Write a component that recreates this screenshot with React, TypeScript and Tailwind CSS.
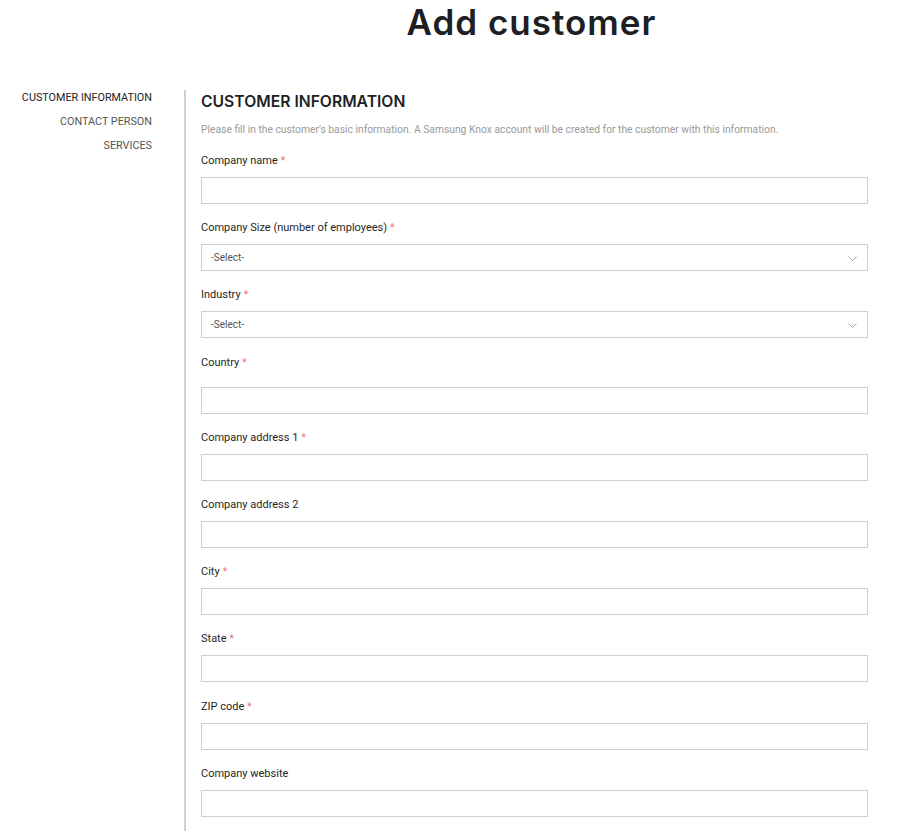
import React from "react";

const body = { fontFamily: "Roboto, 'Liberation Sans', sans-serif" };
const display = { fontFamily: "Inter, 'Liberation Sans', sans-serif" };

function Label({ text, req }: { text: string; req?: boolean }) {
  return (
    <div className="h-[15px] pt-[1px] text-[11px] leading-[14px] text-[#1f1f1f]">
      {text}
      {req && <span className="ml-[3px] text-[10px] text-[#ef6b70]">*</span>}
    </div>
  );
}

function Input() {
  return <div className="h-[27px] w-full border border-[#cfcfcf] bg-white" />;
}

function Select() {
  return (
    <div className="flex h-[27px] w-full items-center justify-between border border-[#cfcfcf] bg-white pl-[9px] pr-[9px]">
      <span className="text-[10px] text-[#555]">-Select-</span>
      <svg width="9" height="5" viewBox="0 0 9 5" className="mr-[1px] mt-[1px]">
        <polyline points="0.5,0.5 4.5,4.5 8.5,0.5" fill="none" stroke="#a8a8a8" strokeWidth="1" />
      </svg>
    </div>
  );
}

function Field({ label, req, kind = "input", extra = 0, after = 16 }: { label: string; req?: boolean; kind?: "input" | "select"; extra?: number; after?: number }) {
  return (
    <div style={{ marginBottom: after }}>
      <Label text={label} req={req} />
      <div style={{ height: 9 + extra }} />
      {kind === "select" ? <Select /> : <Input />}
    </div>
  );
}

export default function App() {
  return (
    <div className="min-h-[832px] w-[912px] bg-white" style={body}>
      <div className="ml-[185px] w-[693px] pt-[1px] text-center">
        <h1 className="text-[35px] font-semibold leading-[42px] tracking-[1px] text-[#1e1f24]" style={display}>
          Add customer
        </h1>
      </div>
      <div className="mt-[47px] flex">
        <nav className="flex w-[152px] flex-col items-end pt-[1px] text-[10.8px] uppercase leading-[14px]">
          <div className="text-[#222]">Customer Information</div>
          <div className="mt-[10px] text-[#555]">Contact Person</div>
          <div className="mt-[10px] text-[#555]">Services</div>
        </nav>
        <div className="ml-[32px] w-[2px] self-stretch bg-[#cfcfcf]" />
        <div className="ml-[15px] w-[667px] pb-[14px]">
          <h2 className="h-[22px] pt-[2px] text-[15.7px] font-semibold leading-[20px] text-[#1e1f24]" style={display}>
            CUSTOMER INFORMATION
          </h2>
          <p className="mt-[12px] text-[10.3px] leading-[12px] text-[#9a9a9a]">
            Please fill in the customer's basic information. A Samsung Knox account will be created for the customer with this information.
          </p>
          <div className="mt-[17px]">
            <Field label="Company name" req />
            <Field label="Company Size (number of employees)" req kind="select" />
            <Field label="Industry" req kind="select" after={17} />
            <Field label="Country" req extra={8} />
            <Field label="Company address 1" req />
            <Field label="Company address 2" />
            <Field label="City" req />
            <Field label="State" req after={17} />
            <Field label="ZIP code" req />
            <Field label="Company website" after={0} />
          </div>
        </div>
      </div>
    </div>
  );
}
